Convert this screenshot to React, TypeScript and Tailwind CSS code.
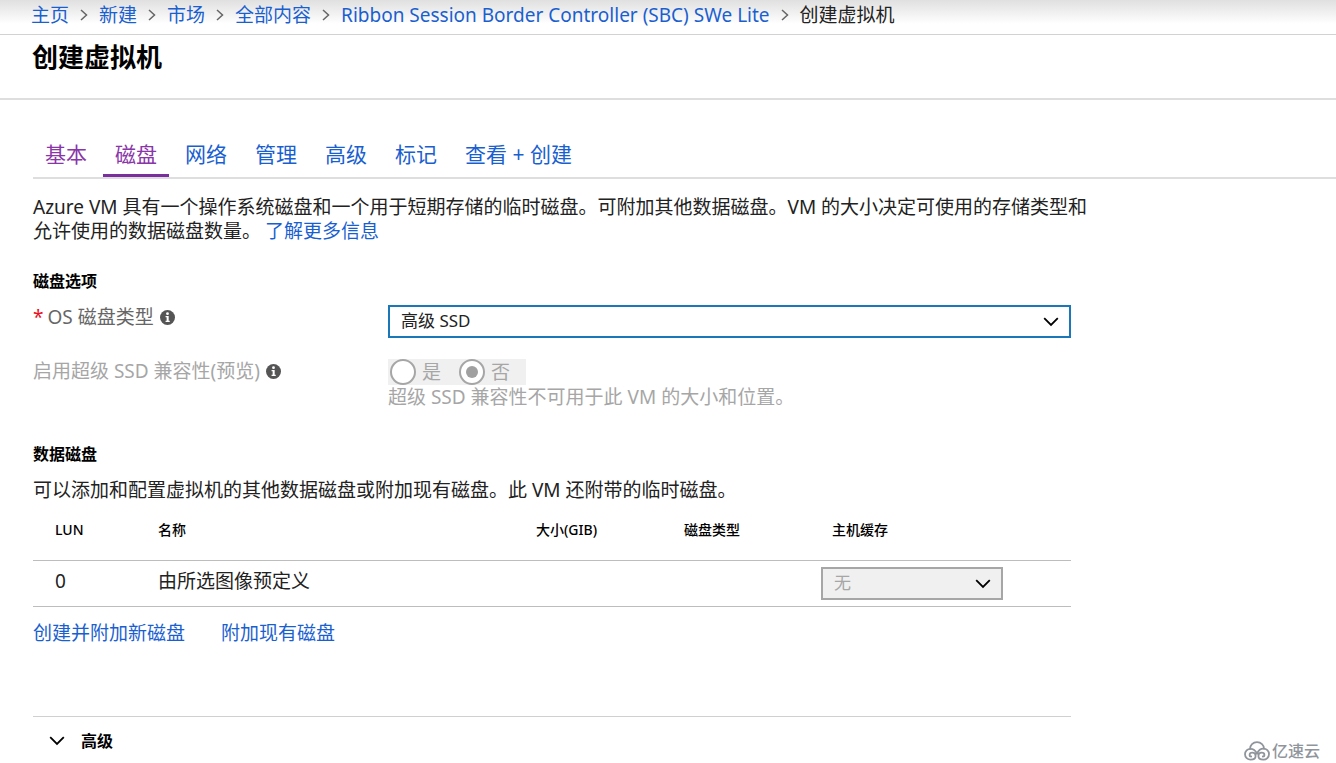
import { Fragment, useState } from 'react';

interface Disk {
  lun: number;
  name: string;
  size: string;
  type: string;
}

const crumbs = ['主页', '新建', '市场', '全部内容', 'Ribbon Session Border Controller (SBC) SWe Lite'];

const tabs = ['基本', '磁盘', '网络', '管理', '高级', '标记', '查看 + 创建'];

const disks: Disk[] = [{ lun: 0, name: '由所选图像预定义', size: '', type: '' }];

function Chevron({ className }: { className?: string }) {
  return (
    <svg className={className} width="16" height="10" viewBox="0 0 16 10" fill="none" stroke="currentColor" strokeWidth={1.8}>
      <path d="M1.2 1.2L8 8l6.8-6.8" />
    </svg>
  );
}

function InfoIcon() {
  return (
    <svg className="w-[15px] h-[15px] shrink-0" viewBox="0 0 14 14">
      <circle cx="7" cy="7" r="7" fill="#555555" />
      <circle cx="7" cy="3.4" r="1.3" fill="#fff" />
      <path d="M5.2 5.6h2.9v4.5h1v1.2H5.2v-1.2h1V6.8h-1z" fill="#fff" />
    </svg>
  );
}

function CloudLogo() {
  return (
    <svg width="26" height="20" viewBox="0 0 26 20" fill="none" stroke="currentColor" strokeWidth={1.8} strokeLinecap="round">
      <path d="M6 8C6 4 9 1.200 13 1.200S20 4 20 7.700" />
      <path d="M13 12.500c-1.500-3-3.700-4.700-6.500-4.700A5.400 5.400 0 0 0 1 13.200a5.500 5.500 0 0 0 5.700 5.500c2.900 0 4.900-1.600 4.900-3.700 0-1.900-1.500-3.300-3.300-3.300-1.500 0-2.700 1-2.700 2.200 0 1 .7 1.600 1.600 1.600" />
      <path d="M13 12.500c1.500-3.200 3.600-4.900 6.400-4.900a5.500 5.500 0 0 1 5.600 5.500 5.500 5.500 0 0 1-5.700 5.600c-2.900 0-4.900-1.600-4.900-3.700 0-1.900 1.500-3.300 3.300-3.300 1.500 0 2.700 1 2.700 2.200 0 1-.7 1.600-1.600 1.600" />
    </svg>
  );
}

export default function App() {
  const [tab, setTab] = useState('磁盘');
  const [diskType, setDiskType] = useState('高级 SSD');
  const [showAdvanced, setShowAdvanced] = useState(false);

  return (
    <div className="relative min-h-screen bg-white text-[19px] leading-6 text-[#222] font-['Noto_Sans','Noto_Sans_CJK_SC',sans-serif]">
      {/* Breadcrumb */}
      <nav className="flex items-center gap-2.5 h-[35px] pl-[31px] pb-1 border-b border-[#d2d2d2] bg-linear-to-b from-[#e0e0e0] to-white to-70% whitespace-nowrap">
        {crumbs.map((c) => (
          <Fragment key={c}>
            <a href="#" className="text-[#1a5fd0]">{c}</a>
            <svg className="w-2.5 h-3 text-[#666]" viewBox="0 0 10 12" fill="none" stroke="currentColor" strokeWidth={1.5}>
              <path d="M2 1l5.500 5L2 11" />
            </svg>
          </Fragment>
        ))}
        <span>创建虚拟机</span>
      </nav>

      {/* Title */}
      <header className="h-[65px] pl-8 pt-1.5 border-b-2 border-[#dedede]">
        <h1 className="text-[26px] leading-8 font-bold text-black">创建虚拟机</h1>
      </header>

      <main className="pl-[33px] pt-[31px]">
        {/* Tabs */}
        <div role="tablist" className="flex gap-1 border-b-2 border-[#dedede] text-[21px]">
          {tabs.map((t, i) => (
            <button
              key={t}
              role="tab"
              aria-selected={t === tab}
              onClick={() => setTab(t)}
              className={`h-[46px] px-3 pt-0.5 border-b-3 ${t === tab ? 'border-[#7a2f9c]' : 'border-transparent'} ${i < 2 ? 'text-[#8a35a8]' : 'text-[#1a5fd0]'}`}
            >
              {t}
            </button>
          ))}
        </div>

        <div className="max-w-[1038px]">
          <p className="mt-4 whitespace-nowrap">
            Azure VM 具有一个操作系统磁盘和一个用于短期存储的临时磁盘。可附加其他数据磁盘。VM 的大小决定可使用的存储类型和
            <br />
            允许使用的数据磁盘数量。
            <a href="#" className="ml-1 text-[#1a5fd0]">了解更多信息</a>
          </p>

          {/* Disk options */}
          <h2 className="mt-[26px] text-base leading-6 font-bold text-black">磁盘选项</h2>
          <div className="flex mt-3">
            <div className="flex items-center gap-1.5 w-[355px] h-6 shrink-0 text-[#666]">
              <label htmlFor="os-disk">
                <span className="mr-1 text-[#e81123]">*</span>
                OS 磁盘类型
              </label>
              <InfoIcon />
            </div>
            <div className="relative flex-1">
              <select
                id="os-disk"
                value={diskType}
                onChange={(e) => setDiskType(e.target.value)}
                className="block appearance-none w-full h-[33px] pl-[11px] pb-0.5 bg-white border-2 border-[#1b78b8] text-[17px] text-[#222] outline-none"
              >
                <option>高级 SSD</option>
                <option>标准 SSD</option>
                <option>标准 HDD</option>
              </select>
              <Chevron className="absolute right-3 top-3 pointer-events-none text-black" />
            </div>
          </div>

          <div className="flex mt-[21px] text-[#a6a6a6]">
            <div className="flex items-center gap-1.5 w-[355px] h-6 shrink-0">
              <span id="ultra-label">启用超级 SSD 兼容性(预览)</span>
              <InfoIcon />
            </div>
            <div>
              <div role="radiogroup" aria-labelledby="ultra-label" className="inline-flex gap-[18px] h-[26px] pl-0.5 pr-4 bg-[#f0f0f0] align-top">
                {['是', '否'].map((v) => (
                  <label key={v} className="flex items-center gap-1.5">
                    <input
                      type="radio"
                      name="ultra"
                      disabled
                      defaultChecked={v === '否'}
                      className="appearance-none grid place-items-center w-[26px] h-[26px] rounded-full border-2 border-[#a6a6a6] bg-white checked:before:block checked:before:w-3 checked:before:h-3 checked:before:rounded-full checked:before:bg-[#a0a0a0]"
                    />
                    {v}
                  </label>
                ))}
              </div>
              <p>超级 SSD 兼容性不可用于此 VM 的大小和位置。</p>
            </div>
          </div>

          {/* Data disks */}
          <h2 className="mt-[33px] text-base leading-6 font-bold text-black">数据磁盘</h2>
          <p className="mt-3">可以添加和配置虚拟机的其他数据磁盘或附加现有磁盘。此 VM 还附带的临时磁盘。</p>
          <table className="w-full table-fixed mt-4 text-left">
            <thead>
              <tr className="h-[42px] border-b border-[#bdbdbd] align-top text-sm leading-6 text-black">
                <th className="w-[103px] pl-[22px] font-medium">LUN</th>
                <th className="w-[378px] pl-[22px] font-medium">名称</th>
                <th className="w-[148px] pl-[22px] font-medium">大小(GIB)</th>
                <th className="w-[148px] pl-[22px] font-medium">磁盘类型</th>
                <th className="pl-[22px] font-medium">主机缓存</th>
              </tr>
            </thead>
            <tbody>
              {disks.map((d) => (
                <tr key={d.lun} className="h-[46px] border-b border-[#bdbdbd]">
                  <td className="pl-[22px] pb-1">{d.lun}</td>
                  <td className="pl-[22px] pb-1">{d.name}</td>
                  <td className="pl-[22px]">{d.size}</td>
                  <td className="pl-[22px]">{d.type}</td>
                  <td className="pl-[11px]">
                    <div className="relative w-[182px]">
                      <select
                        aria-label="主机缓存"
                        disabled
                        className="block appearance-none w-full h-[33px] pl-[11px] bg-[#f0f0f0] border-2 border-[#a6a6a6] text-[17px] text-[#a6a6a6] opacity-100"
                      >
                        <option>无</option>
                      </select>
                      <Chevron className="absolute right-3 top-3 pointer-events-none text-black" />
                    </div>
                  </td>
                </tr>
              ))}
            </tbody>
          </table>
          <div className="flex gap-9 mt-3.5 text-[#1a5fd0]">
            <a href="#">创建并附加新磁盘</a>
            <a href="#">附加现有磁盘</a>
          </div>

          {/* Advanced */}
          <div className="mt-[71px] pt-3 border-t border-[#d0d0d0]">
            <button
              aria-expanded={showAdvanced}
              onClick={() => setShowAdvanced(!showAdvanced)}
              className="flex items-center gap-4 pl-4 text-base leading-6 font-bold text-black"
            >
              <Chevron />
              高级
            </button>
          </div>
        </div>
      </main>

      {/* Watermark */}
      <div className="absolute right-4 bottom-0 flex items-center gap-0.5 text-base leading-6 font-medium text-[#90959c]">
        <CloudLogo />
        亿速云
      </div>
    </div>
  );
}
